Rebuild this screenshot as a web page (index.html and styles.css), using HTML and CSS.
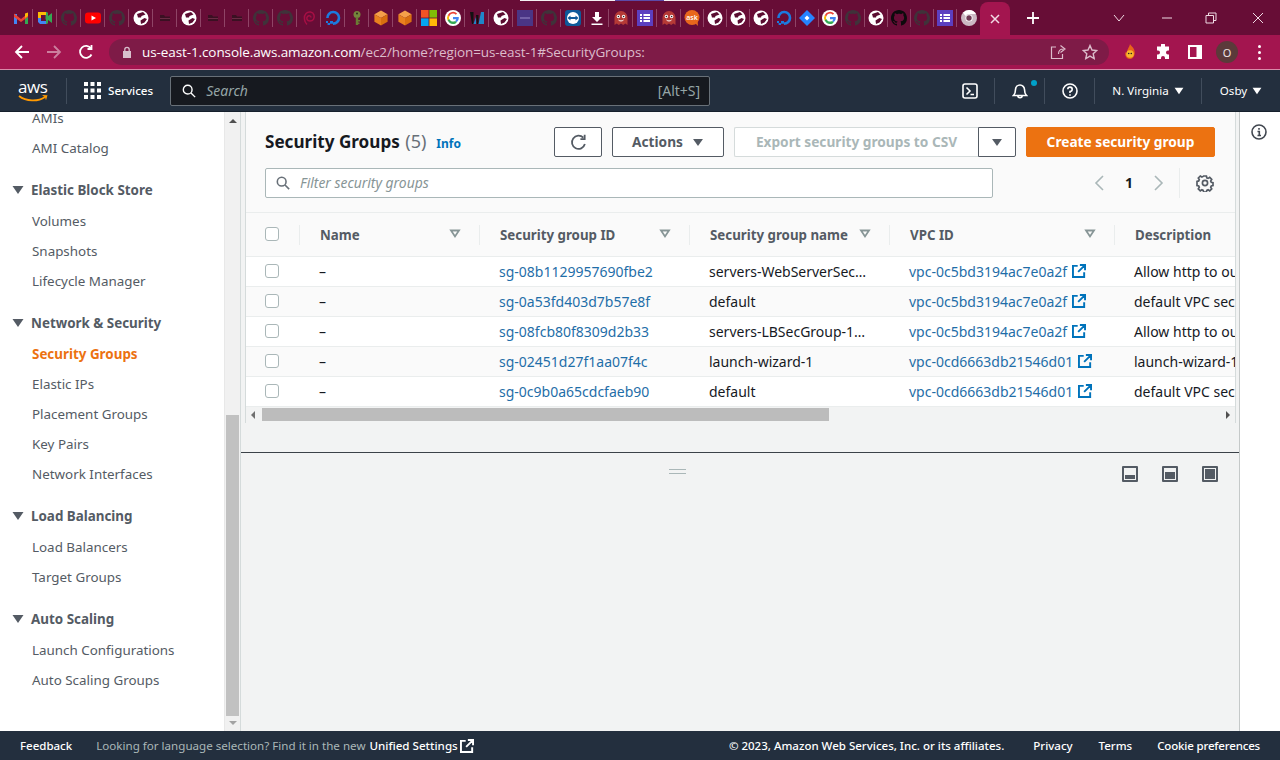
FILE: index.html
```html
<!DOCTYPE html>
<html lang="en">

<head>
  <meta charset="UTF-8">
  <meta name="viewport" content="width=device-width, initial-scale=1.0">
  <title>Security Groups | EC2 Management Console</title>

  <link rel="stylesheet" href="styles.css">
</head>

<body>
  <!-- favicons and icons used more than once -->
  <svg class="sprites" aria-hidden="true">
    <symbol id="i-gh" viewBox="0 0 16 16"><path fill="currentColor" d="M8 0C3.58 0 0 3.58 0 8c0 3.54 2.29 6.53 5.47 7.59.4.07.55-.17.55-.38 0-.19-.01-.82-.01-1.49-2.01.37-2.53-.49-2.69-.94-.09-.23-.48-.94-.82-1.13-.28-.15-.68-.52-.01-.53.63-.01 1.08.58 1.23.82.72 1.21 1.87.87 2.33.66.07-.52.28-.87.51-1.07-1.78-.2-3.64-.89-3.64-3.95 0-.87.31-1.59.82-2.15-.08-.2-.36-1.02.08-2.12 0 0 .67-.21 2.2.82.64-.18 1.32-.27 2-.27s1.36.09 2 .27c1.53-1.04 2.2-.82 2.2-.82.44 1.1.16 1.92.08 2.12.51.56.82 1.27.82 2.15 0 3.07-1.87 3.75-3.65 3.95.29.25.54.73.54 1.48 0 1.07-.01 1.93-.01 2.2 0 .21.15.46.55.38A8.013 8.013 0 0016 8c0-4.42-3.58-8-8-8z"/></symbol>
    <symbol id="i-globe" viewBox="0 0 16 16"><circle cx="8" cy="8" r="7.5" fill="#fff"/><path fill="#5a0c30" d="M4 4l6-2 2.500 2.500L8.500 6 8 7.500 5 7.500zM7.500 10.500l4-2.500 2.500 1-2.500 3.500-3.500 1.500z"/></symbol>
    <symbol id="i-folder" viewBox="0 0 16 16"><path fill="#3a1022" d="M3 5h4l1 1.500h5V11H3z"/><path fill="#6b2a44" d="M3 8h10v1H3z"/></symbol>
    <symbol id="i-do" viewBox="0 0 16 16"><path fill="none" stroke="#1b7be0" stroke-width="2.600" d="M8 13.600A5.800 5.800 0 1 0 2.400 8"/><path fill="#1b7be0" d="M5 11h3v2.800H5zM2.600 13h2.400v2H2.600zM1 11h2v2H1z"/></symbol>
    <symbol id="i-cube" viewBox="0 0 16 16"><path fill="#f5a04a" d="M8 .5l6.600 3.800L8 8 1.400 4.300z"/><path fill="#e8811f" d="M1.400 4.300L8 8v7.500l-6.600-3.800z"/><path fill="#d86f10" d="M14.600 4.300L8 8v7.500l6.600-3.800z"/></symbol>
    <symbol id="i-google" viewBox="0 0 16 16"><circle cx="8" cy="8" r="8" fill="#fff"/><path fill="#ea4335" d="M8 3.600c1.100 0 2 .4 2.800 1.100l1.300-1.300A6 6 0 0 0 2.700 5.200l1.600 1.200C4.800 4.800 6.300 3.600 8 3.600z"/><path fill="#4285f4" d="M13.800 8.100c0-.4 0-.8-.1-1.200H8v2.300h3.300a2.800 2.800 0 0 1-1.200 1.800l1.600 1.200c1-.9 2.100-2.300 2.100-4.100z"/><path fill="#fbbc05" d="M4.300 9.500a3.700 3.700 0 0 1 0-3.100L2.700 5.200a6 6 0 0 0 0 5.500z"/><path fill="#34a853" d="M8 14c1.600 0 3-.5 3.700-1.800l-1.600-1.200c-.6.400-1.300.6-2.100.6-1.700 0-3.200-1.100-3.700-2.600l-1.600 1.200A6 6 0 0 0 8 14z"/></symbol>
    <symbol id="i-ghost" viewBox="0 0 16 16"><path fill="#b53a36" d="M1.500 15V7.500a6.500 6.500 0 0 1 13 0V15l-2.200-1.400L10.200 15 8 13.600 5.800 15l-2.100-1.400z"/><circle cx="5.400" cy="6.500" r="1.700" fill="#fff"/><circle cx="10.600" cy="6.500" r="1.700" fill="#fff"/><circle cx="5.400" cy="6.500" r=".8" fill="#222"/><circle cx="10.600" cy="6.500" r=".8" fill="#222"/><path fill="none" stroke="#fff" d="M5.500 10c1.300 1.300 3.700 1.300 5 0"/></symbol>
    <symbol id="i-list" viewBox="0 0 16 16"><path fill="#5c3fc0" d="M0 0h16v16H0z"/><path fill="#fff" d="M3 4h2v2H3zM6.500 4H13v2H6.500zM3 7h2v2H3zM6.500 7H13v2H6.500zM3 10h2v2H3zM6.500 10H13v2H6.500z"/></symbol>
    <symbol id="i-ext" viewBox="0 0 16 16"><path fill="none" stroke="currentColor" stroke-width="2.200" d="M6.500 2.100H1.100v12.800h12.800V9.500M9 1.100h5.900V7M14.500 1.500L7 9"/></symbol>
    <symbol id="i-sort" viewBox="0 0 12 10"><path fill="none" stroke="currentColor" stroke-width="1.800" d="M2 1.500h8L6 7.500z"/></symbol>
    <symbol id="i-caret" viewBox="0 0 12 10"><path fill="currentColor" d="M.5 1h11L6 9z"/></symbol>
  </svg>

  <div class="page">
    <div class="window-edge">
      <i class="edge-white"></i><i class="edge-purple"></i><i class="edge-light"></i>
    </div>

    <header class="tabstrip">
      <div class="tabs">
        <span class="tab"><svg class="fav" viewBox="0 0 16 16"><path fill="#4285f4" d="M1 4h3v10H1z"/><path fill="#34a853" d="M12 4h3v10h-3z"/><path fill="#ea4335" d="M1 3.500l7 5.500 7-5.500v3.500L8 12 1 7z"/><path fill="#fbbc05" d="M12 3.500l3-1V6l-3 2z"/></svg></span>
        <span class="tab"><svg class="fav" viewBox="0 0 16 16"><path fill="#fbbc05" d="M1 2h8v3H4v3H1z"/><path fill="#4285f4" d="M1 8h3v3h5v3H3l-2-2z"/><path fill="#34a853" d="M9 2h1l1 1v3l4-3v10l-4-3v3l-1 1H9V9.500h-.5V5H9z"/></svg></span>
        <span class="tab"><svg class="fav gh-dim"><use href="#i-gh"/></svg></span>
        <span class="tab"><svg class="fav" viewBox="0 0 16 16"><rect y="2.500" width="16" height="11" rx="3" fill="#f00"/><path fill="#fff" d="M6.500 5.500L11 8l-4.500 2.500z"/></svg></span>
        <span class="tab"><svg class="fav gh-dim"><use href="#i-gh"/></svg></span>
        <span class="tab"><svg class="fav"><use href="#i-globe"/></svg></span>
        <span class="tab"><svg class="fav"><use href="#i-folder"/></svg></span>
        <span class="tab"><svg class="fav"><use href="#i-globe"/></svg></span>
        <span class="tab"><svg class="fav"><use href="#i-folder"/></svg></span>
        <span class="tab"><svg class="fav"><use href="#i-folder"/></svg></span>
        <span class="tab"><svg class="fav gh-dim"><use href="#i-gh"/></svg></span>
        <span class="tab"><svg class="fav gh-dim"><use href="#i-gh"/></svg></span>
        <span class="tab"><svg class="fav" viewBox="0 0 16 16"><path fill="none" stroke="#a80f45" stroke-width="1.500" d="M6 14.500C3 12 2.500 6 5 3.500s7-2 8 1.500-1 6-4 6-4-3-2.500-4.500 3.500-.5 3.500 1"/></svg></span>
        <span class="tab"><svg class="fav"><use href="#i-do"/></svg></span>
        <span class="tab"><svg class="fav" viewBox="0 0 16 16"><circle cx="8" cy="4.500" r="3.500" fill="#76853c"/><circle cx="8" cy="3.500" r="1" fill="#2e2c1a"/><path fill="#6a7a34" d="M6.800 7h2.400v8H6.800zM9 10h2v1.500H9zM9 12.500h1.500V14H9z"/></svg></span>
        <span class="tab"><svg class="fav"><use href="#i-cube"/></svg></span>
        <span class="tab"><svg class="fav"><use href="#i-cube"/></svg></span>
        <span class="tab"><svg class="fav" viewBox="0 0 16 16"><path fill="#f35325" d="M0 0h7.600v7.600H0z"/><path fill="#81bc06" d="M8.400 0H16v7.600H8.400z"/><path fill="#05a6f0" d="M0 8.400h7.600V16H0z"/><path fill="#ffba08" d="M8.400 8.400H16V16H8.400z"/></svg></span>
        <span class="tab"><svg class="fav"><use href="#i-google"/></svg></span>
        <span class="tab"><svg class="fav" viewBox="0 0 16 16"><path fill="#111" d="M1 2h3.500v12H3zM7 5h2.500v9H8z"/><path fill="#1f86c9" d="M4.500 14L7 7v7zM9.500 14L12 2h3v12z"/></svg></span>
        <span class="tab"><svg class="fav"><use href="#i-globe"/></svg></span>
        <span class="tab"><svg class="fav" viewBox="0 0 16 16"><path fill="#4a3585" d="M0 0h16v16H0z"/><path fill="#9c8cc8" d="M3 7.500h10v1H3z"/></svg></span>
        <span class="tab"><svg class="fav gh-dim"><use href="#i-gh"/></svg></span>
        <span class="tab"><svg class="fav" viewBox="0 0 16 16"><rect width="16" height="16" rx="3" fill="#0e5a9a"/><circle cx="8" cy="8" r="6" fill="#fff"/><path fill="#0e5a9a" d="M2.500 8L5.500 5.500V7h5V5.500L13.500 8l-3 2.500V9h-5v1.500z"/></svg></span>
        <span class="tab"><svg class="fav" viewBox="0 0 16 16"><path fill="#fff" d="M6 2h4v5h3l-5 5-5-5h3zM2.500 13.500h11V15h-11z"/></svg></span>
        <span class="tab"><svg class="fav"><use href="#i-ghost"/></svg></span>
        <span class="tab"><svg class="fav"><use href="#i-list"/></svg></span>
        <span class="tab"><svg class="fav"><use href="#i-ghost"/></svg></span>
        <span class="tab tab-tight"><svg class="fav" viewBox="0 0 16 16"><circle cx="8" cy="7.500" r="7.500" fill="#e8671c"/><path fill="#e8671c" d="M11 13l3 3-.5-5z"/><text class="fav-ask" x="8" y="10">ask</text></svg></span>
        <span class="tab tab-tight"><svg class="fav"><use href="#i-globe"/></svg></span>
        <span class="tab tab-tight"><svg class="fav"><use href="#i-globe"/></svg></span>
        <span class="tab tab-tight"><svg class="fav"><use href="#i-globe"/></svg></span>
        <span class="tab tab-tight"><svg class="fav"><use href="#i-do"/></svg></span>
        <span class="tab tab-tight"><svg class="fav" viewBox="0 0 16 16"><path fill="#2684ff" d="M8 0l8 8-8 8-8-8z"/><path fill="#fff" d="M8 5.500L10.500 8 8 10.500 5.500 8z"/></svg></span>
        <span class="tab tab-tight"><svg class="fav"><use href="#i-google"/></svg></span>
        <span class="tab tab-tight"><svg class="fav gh-dim"><use href="#i-gh"/></svg></span>
        <span class="tab tab-tight"><svg class="fav"><use href="#i-globe"/></svg></span>
        <span class="tab tab-tight"><svg class="fav gh-black"><use href="#i-gh"/></svg></span>
        <span class="tab tab-tight"><svg class="fav gh-dim"><use href="#i-gh"/></svg></span>
        <span class="tab tab-tight"><svg class="fav"><use href="#i-list"/></svg></span>
        <span class="tab tab-tight tab-last"><svg class="fav" viewBox="0 0 16 16"><circle cx="8" cy="8" r="8" fill="#cbb9c3"/><path fill="#fff" d="M8 0a8 8 0 0 1 7 4H8a4 4 0 0 0-3.500 2L2 2.800A8 8 0 0 1 8 0z"/><circle cx="8" cy="8" r="3.600" fill="#fff"/><circle cx="8" cy="8" r="2.700" fill="#6f3a55"/></svg></span>
      </div>
      <div class="tab-active">
        <svg class="tab-close" viewBox="0 0 10 10"><path d="M1 1l8 8M9 1L1 9"/></svg>
      </div>
      <svg class="tab-new" viewBox="0 0 12 12"><path d="M6 0v12M0 6h12"/></svg>
      <div class="window-btns">
        <svg class="win-chevron" viewBox="0 0 12 8"><path d="M1 1l5 6 5-6"/></svg>
        <svg class="win-min" viewBox="0 0 12 2"><path d="M1 1h10"/></svg>
        <svg class="win-restore" viewBox="0 0 12 12"><path d="M1 3.500h7.500V11H1zM3.500 3.500V1H11v7.500H8.500"/></svg>
        <svg class="win-close" viewBox="0 0 12 12"><path d="M1 1l10 10M11 1L1 11"/></svg>
      </div>
    </header>

    <div class="toolbar">
      <svg class="tool-btn" viewBox="0 0 16 16"><path d="M15 8H2M8 2L2 8l6 6"/></svg>
      <svg class="tool-btn tool-off" viewBox="0 0 16 16"><path d="M1 8h13M8 2l6 6-6 6"/></svg>
      <svg class="tool-btn" viewBox="0 0 16 16"><path d="M13.500 10.500A6 6 0 1 1 13 4.500M13.500 1v4h-4"/></svg>
      <div class="omnibox">
        <svg class="lock" viewBox="0 0 10 12"><path fill="#d8c0cc" d="M1 5h8v7H1z"/><path fill="none" stroke="#d8c0cc" stroke-width="1.300" d="M2.800 5V3.500a2.200 2.200 0 0 1 4.400 0V5"/></svg>
        <span class="url">us-east-1.console.aws.amazon.com<span class="url-rest">/ec2/home?region=us-east-1#SecurityGroups:</span></span>
        <svg class="omni-icon omni-share" viewBox="0 0 16 16"><path d="M6 3H1.500v11.500h11V10M8.500 10c0-3.500 2-5 5-5M10.500 1.500l4.500 3.500-4.500 3.500"/></svg>
        <svg class="omni-icon omni-star" viewBox="0 0 16 16"><path d="M8 1.500l2 4.500 4.800.5-3.600 3.200 1 4.800L8 12.100l-4.200 2.400 1-4.800L1.200 6.500 6 6z"/></svg>
      </div>
      <svg class="ext-fire" viewBox="0 0 16 16"><path fill="#e8641a" d="M8 0c1 2 4 3.500 4.500 7 1 3-1 8-4.500 8S2.500 11.500 3.500 8c.5 1 1 1.500 1.500 1.500C4.500 6 7 4 8 0z"/><circle cx="8" cy="10" r="3.800" fill="#f7b52c"/><circle cx="6.700" cy="9.500" r=".8" fill="#222"/><circle cx="9.300" cy="9.500" r=".8" fill="#222"/></svg>
      <svg class="ext-puzzle" viewBox="0 0 16 16"><path fill="#fff" d="M6 1a2 2 0 0 1 4 0v1.500h4v4h-1a2 2 0 0 0 0 4h1V15h-4v-1a2 2 0 0 0-4 0v1H2v-4.500h1a2 2 0 0 0 0-4H2v-4h4z"/></svg>
      <svg class="ext-panel" viewBox="0 0 16 16"><path fill="#fff" fill-rule="evenodd" d="M1 1h14v14H1zM3 3v10h6.500V3z"/></svg>
      <span class="avatar">O</span>
      <span class="menu-dots"><i></i><i></i><i></i></span>
    </div>

    <nav class="awsnav">
      <div class="aws-logo">
        <span class="aws-word">aws</span>
        <svg class="aws-smile" viewBox="0 0 30 8"><path fill="none" stroke="#f90" stroke-width="1.800" d="M1 1c7 5.500 19 6 26 1"/><path fill="#f90" d="M24 0l5.500.3-1.500 5-1-3z"/></svg>
      </div>
      <span class="nav-sep"></span>
      <span class="services">
        <svg class="grid-icon" viewBox="0 0 17 17"><path fill="#fff" d="M0 0h4v4H0zM6.500 0h4v4h-4zM13 0h4v4h-4zM0 6.500h4v4H0zM6.500 6.500h4v4h-4zM13 6.500h4v4h-4zM0 13h4v4H0zM6.500 13h4v4h-4zM13 13h4v4h-4z"/></svg>
        Services
      </span>
      <div class="nav-search">
        <svg class="search-icon" viewBox="0 0 16 16"><circle cx="6.500" cy="6.500" r="5"/><path d="M10.300 10.300L15 15"/></svg>
        <span class="nav-search-text">Search</span>
        <span class="nav-shortcut">[Alt+S]</span>
      </div>
      <div class="nav-right">
        <span class="nav-cell cell-shell"><svg class="nav-icon" viewBox="0 0 16 16"><rect x="1" y="1" width="14" height="14" rx="2"/><path d="M4.500 4.500L8 8l-3.500 3.500M8.500 11.500H12"/></svg></span>
        <span class="nav-cell cell-bell">
          <svg class="nav-icon" viewBox="0 0 16 16"><path d="M1.500 12.500h13c-1.500-1.500-2-2.500-2-6a4.500 4.500 0 0 0-9 0c0 3.500-.5 4.500-2 6zM5.800 12.500a2.200 2.200 0 0 0 4.400 0"/></svg>
          <i class="bell-dot"></i>
        </span>
        <span class="nav-cell cell-help"><svg class="nav-icon" viewBox="0 0 16 16"><circle cx="8" cy="8" r="7"/><path d="M5.800 6.200A2.200 2.200 0 1 1 8 8.500v1.500M8 11.200v1.600"/></svg></span>
        <span class="nav-cell cell-region">N. Virginia <svg class="nav-caret"><use href="#i-caret"/></svg></span>
        <span class="nav-cell cell-user">Osby <svg class="nav-caret"><use href="#i-caret"/></svg></span>
      </div>
    </nav>

    <div class="console">
      <aside class="sidenav">
        <ul class="side-list">
          <li class="side-item">AMIs</li>
          <li class="side-item">AMI Catalog</li>
        </ul>
        <h3 class="side-head"><svg class="side-caret"><use href="#i-caret"/></svg>Elastic Block Store</h3>
        <ul class="side-list">
          <li class="side-item">Volumes</li>
          <li class="side-item">Snapshots</li>
          <li class="side-item">Lifecycle Manager</li>
        </ul>
        <h3 class="side-head"><svg class="side-caret"><use href="#i-caret"/></svg>Network &amp; Security</h3>
        <ul class="side-list">
          <li class="side-item side-active">Security Groups</li>
          <li class="side-item">Elastic IPs</li>
          <li class="side-item">Placement Groups</li>
          <li class="side-item">Key Pairs</li>
          <li class="side-item">Network Interfaces</li>
        </ul>
        <h3 class="side-head"><svg class="side-caret"><use href="#i-caret"/></svg>Load Balancing</h3>
        <ul class="side-list">
          <li class="side-item">Load Balancers</li>
          <li class="side-item">Target Groups</li>
        </ul>
        <h3 class="side-head"><svg class="side-caret"><use href="#i-caret"/></svg>Auto Scaling</h3>
        <ul class="side-list">
          <li class="side-item">Launch Configurations</li>
          <li class="side-item">Auto Scaling Groups</li>
        </ul>
      </aside>

      <div class="side-scroll">
        <span class="scroll-up"></span>
        <span class="side-thumb"></span>
        <span class="scroll-down"></span>
      </div>

      <main class="content">
        <section class="top-pane">
          <div class="panel">
            <div class="panel-head">
              <div class="panel-row">
                <h1 class="panel-title">Security Groups <span class="count">(5)</span></h1>
                <a class="info">Info</a>
                <button class="btn btn-refresh"><svg class="refresh-icon" viewBox="0 0 16 16"><path d="M14 9.500A6.200 6.200 0 1 1 12.500 3.500M13.800 .8v4h-4"/></svg></button>
                <button class="btn btn-actions">Actions <svg class="btn-caret"><use href="#i-caret"/></svg></button>
                <button class="btn btn-export">Export security groups to CSV</button>
                <button class="btn btn-split"><svg class="btn-caret"><use href="#i-caret"/></svg></button>
                <button class="btn btn-create">Create security group</button>
              </div>
              <div class="panel-row filter-row">
                <div class="filter">
                  <svg class="filter-icon" viewBox="0 0 16 16"><circle cx="6.500" cy="6.500" r="5"/><path d="M10.300 10.300L15 15"/></svg>
                  <span class="filter-text">Filter security groups</span>
                </div>
                <div class="pager">
                  <svg class="pager-arrow" viewBox="0 0 10 16"><path d="M9 1L2 8l7 7"/></svg>
                  <span class="pager-num">1</span>
                  <svg class="pager-arrow" viewBox="0 0 10 16"><path d="M1 1l7 7-7 7"/></svg>
                </div>
                <span class="pager-sep"></span>
                <svg class="gear" viewBox="-1 -1 18 18"><circle cx="8" cy="8" r="2.600"/><path d="M6.600 1h2.800l.4 1.800 1.300.6 1.600-1 2 2-1 1.600.6 1.300 1.700.4v2.800l-1.700.4-.6 1.300 1 1.600-2 2-1.600-1-1.300.6-.4 1.700H6.600l-.4-1.700-1.300-.6-1.600 1-2-2 1-1.600-.6-1.300-1.700-.4V6.300l1.700-.4.6-1.300-1-1.600 2-2 1.600 1 1.300-.6z"/></svg>
              </div>
            </div>

            <div class="table-wrap">
              <table class="sg-table">
                <colgroup>
                  <col class="col-check"><col class="col-name"><col class="col-id"><col class="col-group"><col class="col-vpc"><col class="col-desc">
                </colgroup>
                <thead>
                  <tr>
                    <th class="th-check"><span class="checkbox"></span></th>
                    <th><span class="th-inner">Name<svg class="sort"><use href="#i-sort"/></svg></span></th>
                    <th><span class="th-inner">Security group ID<svg class="sort"><use href="#i-sort"/></svg></span></th>
                    <th><span class="th-inner">Security group name<svg class="sort"><use href="#i-sort"/></svg></span></th>
                    <th><span class="th-inner">VPC ID<svg class="sort"><use href="#i-sort"/></svg></span></th>
                    <th><span class="th-inner">Description</span></th>
                  </tr>
                </thead>
                <tbody>
                  <tr>
                    <td class="td-check"><span class="checkbox"></span></td>
                    <td>–</td>
                    <td><a class="link">sg-08b1129957690fbe2</a></td>
                    <td>servers-WebServerSec…</td>
                    <td><a class="link">vpc-0c5bd3194ac7e0a2f<svg class="ext"><use href="#i-ext"/></svg></a></td>
                    <td>Allow http to our instances</td>
                  </tr>
                  <tr>
                    <td class="td-check"><span class="checkbox"></span></td>
                    <td>–</td>
                    <td><a class="link">sg-0a53fd403d7b57e8f</a></td>
                    <td>default</td>
                    <td><a class="link">vpc-0c5bd3194ac7e0a2f<svg class="ext"><use href="#i-ext"/></svg></a></td>
                    <td>default VPC security group</td>
                  </tr>
                  <tr>
                    <td class="td-check"><span class="checkbox"></span></td>
                    <td>–</td>
                    <td><a class="link">sg-08fcb80f8309d2b33</a></td>
                    <td>servers-LBSecGroup-1…</td>
                    <td><a class="link">vpc-0c5bd3194ac7e0a2f<svg class="ext"><use href="#i-ext"/></svg></a></td>
                    <td>Allow http to our instances</td>
                  </tr>
                  <tr>
                    <td class="td-check"><span class="checkbox"></span></td>
                    <td>–</td>
                    <td><a class="link">sg-02451d27f1aa07f4c</a></td>
                    <td>launch-wizard-1</td>
                    <td><a class="link">vpc-0cd6663db21546d01<svg class="ext"><use href="#i-ext"/></svg></a></td>
                    <td>launch-wizard-1 created</td>
                  </tr>
                  <tr>
                    <td class="td-check"><span class="checkbox"></span></td>
                    <td>–</td>
                    <td><a class="link">sg-0c9b0a65cdcfaeb90</a></td>
                    <td>default</td>
                    <td><a class="link">vpc-0cd6663db21546d01<svg class="ext"><use href="#i-ext"/></svg></a></td>
                    <td>default VPC security group</td>
                  </tr>
                </tbody>
              </table>
            </div>

            <div class="h-scroll">
              <span class="scroll-left"></span>
              <span class="h-track"><span class="h-thumb"></span></span>
              <span class="scroll-right"></span>
            </div>
          </div>
        </section>

        <section class="bottom-pane">
          <span class="grip"></span>
          <div class="pane-btns">
            <span class="pane-btn pane-low"></span>
            <span class="pane-btn pane-mid"></span>
            <span class="pane-btn pane-full"></span>
          </div>
        </section>
      </main>

      <aside class="help-rail">
        <svg class="info-icon" viewBox="0 0 16 16"><circle cx="8" cy="8" r="7"/><path d="M6.500 7.500H8.300V11.500M6.500 11.500h3.500M8 4v1.800"/></svg>
      </aside>
    </div>

    <footer class="footer">
      <span class="foot-feedback">Feedback</span>
      <span class="foot-note">Looking for language selection? Find it in the new <span class="foot-link">Unified Settings<svg class="foot-ext"><use href="#i-ext"/></svg></span></span>
      <span class="foot-copy">© 2023, Amazon Web Services, Inc. or its affiliates.</span>
      <span class="foot-item foot-privacy">Privacy</span>
      <span class="foot-item foot-terms">Terms</span>
      <span class="foot-item foot-cookie">Cookie preferences</span>
    </footer>
  </div>
</body>

</html>
```

FILE: styles.css
```css
* {
  box-sizing: border-box;
}

html,
body {
  height: 760px;
  margin: 0;
  overflow: hidden;
}

body {
  color: #16191f;
  font-family: "Noto Sans", "Open Sans", sans-serif;
  font-size: 14px;
}

ul {
  list-style: none;
  margin: 0;
  padding: 0;
}

button {
  font-family: inherit;
}

.sprites {
  height: 0;
  position: absolute;
  width: 0;
}

.page {
  display: flex;
  flex-direction: column;
  height: 760px;
  width: 1280px;
}

/* browser chrome */

.window-edge {
  background: #670d36;
  display: flex;
  flex: none;
  height: 1px;
  padding-left: 520px;
}

.edge-white {
  background: #f4f0f2;
  width: 95px;
}

.edge-purple {
  background: #5d4aa8;
  width: 49px;
}

.edge-light {
  background: #f4f0f2;
  width: 96px;
}

.tabstrip {
  align-items: center;
  background: #670d36;
  display: flex;
  flex: none;
  height: 34px;
  padding-left: 9px;
}

.tabs {
  display: flex;
}

.tab {
  align-items: center;
  border-right: 1px solid #8f4466;
  display: flex;
  height: 18px;
  justify-content: center;
  width: 24px;
}

.tab-tight {
  width: 23px;
}

.tab-last {
  border-right: 0;
}

.fav {
  display: block;
  height: 16px;
  width: 16px;
}

.gh-dim {
  color: #40323a;
}

.gh-black {
  color: #0d0a0c;
}

.fav-ask {
  fill: #fff;
  font-family: "Open Sans", sans-serif;
  font-size: 7px;
  font-weight: 600;
  text-anchor: middle;
}

.tab-active {
  align-items: center;
  align-self: flex-end;
  background: #a3154f;
  border-radius: 8px 8px 0 0;
  display: flex;
  height: 33px;
  justify-content: center;
  width: 30px;
}

.tab-close {
  fill: none;
  height: 10px;
  stroke: #f2dbe5;
  stroke-width: 1.500;
  width: 10px;
}

.tab-new {
  fill: none;
  height: 12px;
  margin-left: 17px;
  stroke: #fff;
  stroke-width: 1.800;
  width: 12px;
}

.window-btns {
  align-items: center;
  display: flex;
  margin-left: auto;
}

.window-btns svg {
  fill: none;
  stroke: #f0dbe4;
  stroke-width: 1;
}

.win-chevron {
  height: 8px;
  margin-right: 36px;
  width: 12px;
}

.win-min {
  height: 2px;
  margin-right: 32px;
  width: 12px;
}

.win-restore {
  height: 12px;
  margin-right: 35px;
  width: 12px;
}

.win-close {
  height: 12px;
  margin-right: 16px;
  width: 12px;
}

.toolbar {
  align-items: center;
  background: #a3154f;
  border-bottom: 1px solid #d98aa9;
  display: flex;
  flex: none;
  height: 35px;
  padding-left: 14px;
}

.tool-btn {
  fill: none;
  height: 16px;
  margin-right: 16px;
  stroke: #fff;
  stroke-width: 1.800;
  width: 16px;
}

.tool-off {
  opacity: .45;
}

.omnibox {
  align-items: center;
  background: #7e1b47;
  border-radius: 13px;
  display: flex;
  height: 26px;
  margin-left: -1px;
  padding-left: 13px;
  width: 1000px;
}

.lock {
  height: 12px;
  margin-right: 10px;
  width: 10px;
}

.url {
  color: #fff;
  font-family: "Open Sans", sans-serif;
  font-size: 13.5px;
  letter-spacing: -.1px;
}

.url-rest {
  color: #dcbccb;
}

.omni-icon {
  fill: none;
  height: 16px;
  stroke: #dcbccb;
  stroke-width: 1.200;
  width: 16px;
}

.omni-share {
  margin-left: auto;
}

.omni-star {
  margin-left: 16px;
  margin-right: 11px;
  stroke-width: 1.400;
}

.ext-fire {
  height: 16px;
  margin-left: 13px;
  width: 16px;
}

.ext-puzzle {
  height: 16px;
  margin-left: 17px;
  width: 16px;
}

.ext-panel {
  height: 16px;
  margin-left: 16px;
  width: 16px;
}

.avatar {
  align-items: center;
  background: #5b3a3a;
  border-radius: 50%;
  color: #f0e4e4;
  display: flex;
  font-size: 11px;
  height: 22px;
  justify-content: center;
  margin-left: 13px;
  width: 22px;
}

.menu-dots {
  display: flex;
  flex-direction: column;
  gap: 3px;
  margin-left: 20px;
}

.menu-dots i {
  background: #fff;
  border-radius: 50%;
  height: 3px;
  width: 3px;
}

/* aws top nav */

.awsnav {
  align-items: center;
  background: #232f3e;
  border-bottom: 1px solid #16202c;
  color: #fff;
  display: flex;
  flex: none;
  font-size: 11.6px;
  height: 42px;
  padding-left: 18px;
}

.aws-logo {
  display: flex;
  flex-direction: column;
  height: 26px;
  position: relative;
  width: 31px;
}

.aws-word {
  font-family: "Open Sans", sans-serif;
  font-size: 17px;
  letter-spacing: -.4px;
  line-height: 18px;
}

.aws-smile {
  height: 8px;
  margin-top: -1px;
  width: 30px;
}

.nav-sep {
  background: #414d5c;
  height: 26px;
  margin-left: 17px;
  width: 1px;
}

.services {
  align-items: center;
  display: flex;
  font-weight: 500;
  gap: 7px;
  margin-left: 17px;
}

.grid-icon {
  height: 17px;
  width: 17px;
}

.nav-search {
  align-items: center;
  background: #16191f;
  border: 1px solid #687078;
  border-radius: 2px;
  display: flex;
  height: 30px;
  margin-left: 17px;
  padding: 0 9px 0 11px;
  width: 540px;
}

.search-icon {
  fill: none;
  height: 14px;
  margin-right: 10px;
  stroke: #fff;
  stroke-width: 1.600;
  width: 14px;
}

.nav-search-text {
  color: #95a5a6;
  font-size: 14px;
  font-style: italic;
}

.nav-shortcut {
  color: #95a5a6;
  font-size: 14px;
  margin-left: auto;
}

.nav-right {
  align-items: center;
  display: flex;
  height: 100%;
  margin-left: auto;
}

.nav-cell {
  align-items: center;
  border-left: 1px solid #414d5c;
  display: flex;
  height: 26px;
  justify-content: center;
  position: relative;
}

.cell-shell {
  border-left: 0;
  width: 48px;
}

.cell-bell {
  width: 50px;
}

.cell-help {
  width: 50px;
}

.cell-region {
  gap: 5px;
  width: 107px;
}

.cell-user {
  gap: 5px;
  width: 79px;
}

.nav-icon {
  fill: none;
  height: 16px;
  stroke: #fff;
  stroke-width: 1.600;
  width: 16px;
}

.bell-dot {
  background: #00a1c9;
  border-radius: 50%;
  height: 6px;
  position: absolute;
  right: 7px;
  top: 2px;
  width: 6px;
}

.nav-caret {
  color: #fff;
  height: 8px;
  width: 10px;
}

/* console layout */

.console {
  display: flex;
  flex: 1;
  min-height: 0;
}

.sidenav {
  background: #fff;
  flex: none;
  font-size: 13.4px;
  overflow: hidden;
  width: 224px;
}

.side-list {
  margin-bottom: 11px;
}

.side-list:first-child {
  margin-top: -9px;
}

.side-item {
  color: #545b64;
  height: 30px;
  line-height: 30px;
  padding-left: 32px;
}

.side-active {
  color: #ec7211;
  font-weight: 700;
}

.side-head {
  align-items: center;
  color: #545b64;
  display: flex;
  font-size: 13.4px;
  font-weight: 700;
  height: 32px;
  margin: 0;
  padding-left: 12px;
}

.side-caret {
  color: #545b64;
  height: 10px;
  margin-right: 7px;
  width: 12px;
}

.side-scroll {
  background: #f1f1f1;
  border-left: 1px solid #e8e8e8;
  display: flex;
  flex: none;
  flex-direction: column;
  width: 16px;
}

.scroll-up {
  border-bottom: 4px solid #505050;
  border-left: 4px solid transparent;
  border-right: 4px solid transparent;
  height: 0;
  margin: 7px auto 0;
  width: 0;
}

.side-thumb {
  background: #c1c1c1;
  height: 301px;
  margin: 292px 1px 0;
}

.scroll-down {
  border-left: 4px solid transparent;
  border-right: 4px solid transparent;
  border-top: 4px solid #a3a3a3;
  height: 0;
  margin: 5px auto 0;
  width: 0;
}

.content {
  background: #f2f3f3;
  border-left: 1px solid #d5dbdb;
  border-right: 1px solid #c5c9c9;
  display: flex;
  flex: 1;
  flex-direction: column;
  min-width: 0;
}

.top-pane {
  border-bottom: 1px solid #3b4248;
  flex: none;
  height: 341px;
  padding-left: 4px;
  padding-right: 3px;
}

.panel {
  border-left: 1px solid #d5dbdb;
  border-right: 1px solid #d5dbdb;
  height: 311px;
  overflow: hidden;
}

/* table header block */

.panel-head {
  background: #fafafa;
  border-bottom: 1px solid #eaeded;
  height: 101px;
  padding: 15px 20px 0 19px;
}

.panel-row {
  align-items: center;
  display: flex;
  height: 30px;
}

.filter-row {
  margin-top: 11px;
}

.panel-title {
  font-size: 17.1px;
  font-weight: 700;
  margin: 0 0 2px;
  white-space: nowrap;
}

.count {
  color: #687078;
  font-size: 18px;
  font-weight: 400;
  margin-left: 1px;
}

.info {
  color: #0073bb;
  font-size: 12px;
  font-weight: 700;
  margin-left: 10px;
  margin-top: 2px;
}

.btn {
  align-items: center;
  background: #fff;
  border: 1px solid #545b64;
  border-radius: 2px;
  color: #545b64;
  display: flex;
  font-size: 13.7px;
  font-weight: 700;
  height: 30px;
  justify-content: center;
  padding: 0 0 2px;
}

.btn-refresh {
  margin-left: auto;
  padding: 0;
  width: 48px;
}

.refresh-icon {
  fill: none;
  height: 17px;
  stroke: #545b64;
  stroke-width: 1.700;
  width: 17px;
}

.btn-actions {
  gap: 9px;
  margin-left: 10px;
  width: 112px;
}

.btn-caret {
  color: #545b64;
  height: 9px;
  margin-top: 2px;
  width: 12px;
}

.btn-export {
  border-color: #d5dbdb;
  border-right: 0;
  border-radius: 2px 0 0 2px;
  color: #aab7b8;
  margin-left: 10px;
  width: 244px;
}

.btn-split {
  border-radius: 0 2px 2px 0;
  width: 38px;
}

.btn-create {
  background: #ec7211;
  border-color: #ec7211;
  color: #fff;
  margin-left: 10px;
  width: 189px;
}

.filter {
  align-items: center;
  background: #fff;
  border: 1px solid #aab7b8;
  border-radius: 2px;
  display: flex;
  height: 30px;
  padding-left: 10px;
  width: 728px;
}

.filter-icon {
  fill: none;
  height: 14px;
  margin-right: 10px;
  stroke: #687078;
  stroke-width: 1.800;
  width: 14px;
}

.filter-text {
  color: #879596;
  font-size: 13.9px;
  font-style: italic;
  margin-bottom: 2px;
}

.pager {
  align-items: center;
  display: flex;
  margin-left: 101px;
}

.pager-arrow {
  fill: none;
  height: 16px;
  stroke: #aab7b8;
  stroke-width: 1.600;
  width: 10px;
}

.pager-num {
  font-weight: 700;
  margin-bottom: 2px;
  text-align: center;
  width: 50px;
}

.pager-sep {
  background: #eaeded;
  height: 30px;
  margin-left: 15px;
  width: 1px;
}

.gear {
  fill: none;
  height: 18px;
  margin-left: 16px;
  stroke: #545b64;
  stroke-width: 1.700;
  width: 18px;
}

/* table */

.table-wrap {
  overflow: hidden;
}

.sg-table {
  border-collapse: collapse;
  table-layout: fixed;
  width: 1069px;
}

.col-check {
  width: 53px;
}

.col-name {
  width: 180px;
}

.col-id {
  width: 210px;
}

.col-group {
  width: 200px;
}

.col-vpc {
  width: 225px;
}

.col-desc {
  width: 201px;
}

.sg-table th {
  background: #fafafa;
  border-bottom: 1px solid #eaeded;
  color: #545b64;
  font-size: 13.3px;
  font-weight: 700;
  height: 43px;
  padding: 1px 0 0;
  text-align: left;
}

.th-check,
.td-check {
  padding-left: 19px !important;
}

.th-check {
  padding-top: 0 !important;
}

.th-inner {
  align-items: center;
  border-left: 1px solid #eaeded;
  display: flex;
  height: 20px;
  justify-content: space-between;
  padding: 0 18px 0 20px;
}

.sort {
  color: #879596;
  height: 10px;
  margin-bottom: 2px;
  width: 12px;
}

.sg-table td {
  border-bottom: 1px solid #eaeded;
  height: 30px;
  padding: 0 0 0 20px;
  white-space: nowrap;
}

.sg-table tbody tr:nth-child(even) td {
  background: #fafafa;
}

.sg-table tbody tr:nth-child(odd) td {
  background: #fff;
}

.checkbox {
  background: #fff;
  border: 1px solid #aab7b8;
  border-radius: 3px;
  display: block;
  height: 14px;
  margin-bottom: 1px;
  width: 14px;
}

.link {
  align-items: center;
  color: #1f6ea8;
  display: inline-flex;
  gap: 5px;
}

.ext {
  color: #0073bb;
  height: 14px;
  width: 14px;
}

.h-scroll {
  align-items: center;
  background: #f2f3f3;
  display: flex;
  height: 16px;
}

.scroll-left,
.scroll-right {
  border-bottom: 4px solid transparent;
  border-top: 4px solid transparent;
  height: 0;
  width: 0;
}

.scroll-left {
  border-right: 4px solid #707070;
  margin: 0 7px 0 5px;
}

.scroll-right {
  border-left: 4px solid #505050;
  margin: 0 5px 0 6px;
}

.h-track {
  flex: 1;
}

.h-thumb {
  background: #bcbcbc;
  display: block;
  height: 13px;
  width: 567px;
}

/* lower split pane */

.bottom-pane {
  flex: 1;
  position: relative;
}

.grip {
  border-bottom: 1px solid #aab7b8;
  border-top: 1px solid #aab7b8;
  height: 5px;
  left: 428px;
  position: absolute;
  top: 16px;
  width: 17px;
}

.pane-btns {
  display: flex;
  gap: 24px;
  justify-content: flex-end;
  padding: 13px 21px 0 0;
}

.pane-btn {
  align-items: flex-end;
  background: #f2f3f3;
  border: 2px solid #545b64;
  border-radius: 1px;
  display: flex;
  height: 16px;
  padding: 1px;
  width: 16px;
}

.pane-btn::before {
  background: #545b64;
  content: "";
  display: block;
  width: 100%;
}

.pane-low::before {
  height: 4px;
}

.pane-mid::before {
  height: 7px;
}

.pane-full::before {
  height: 10px;
}

.help-rail {
  background: #fff;
  display: flex;
  flex: none;
  justify-content: center;
  padding: 12px 2px 0 0;
  width: 40px;
}

.info-icon {
  fill: none;
  height: 16px;
  stroke: #414750;
  stroke-width: 1.600;
  width: 16px;
}

/* footer */

.footer {
  align-items: center;
  background: #232f3e;
  color: #fff;
  display: flex;
  flex: none;
  font-size: 11.5px;
  font-weight: 500;
  height: 29px;
  padding-left: 20px;
}

.foot-note {
  align-items: center;
  color: #aab7b8;
  display: flex;
  font-size: 11.6px;
  font-weight: 400;
  gap: 3px;
  margin-left: 24px;
}

.foot-link {
  align-items: center;
  color: #fff;
  display: flex;
  font-weight: 500;
  gap: 2px;
  margin-left: 1px;
}

.foot-ext {
  color: #fff;
  height: 14px;
  width: 14px;
}

.foot-copy {
  margin-left: auto;
}

.foot-privacy {
  margin-left: 29px;
}

.foot-terms {
  margin-left: 26px;
}

.foot-cookie {
  letter-spacing: -.17px;
  margin-left: 25px;
  margin-right: 20px;
}
```
